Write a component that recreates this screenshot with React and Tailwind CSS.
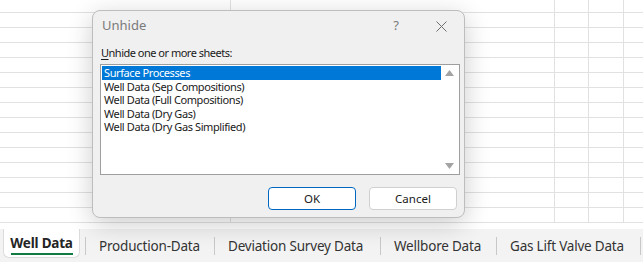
import React from 'react';

const rows = Array.from({ length: 15 });

const GridRow = ({ first }) => (
  <div className={`flex border-b border-[#e1e1e1] ${first ? 'h-[13px]' : 'h-[15px]'}`}>
    <div className="w-[231px] border-r border-[#e1e1e1]" />
    <div className="w-[324px] border-r border-[#e1e1e1]" />
    <div className="w-[34px] border-r border-[#e1e1e1]" />
    <div className="w-[35px] border-r border-[#e1e1e1]" />
    <div className="flex-1" />
  </div>
);

const sheets = [
  'Surface Processes',
  'Well Data (Sep Compositions)',
  'Well Data (Full Compositions)',
  'Well Data (Dry Gas)',
  'Well Data (Dry Gas Simplified)',
];

const tabs = [
  { name: 'Production-Data', w: 'w-[129px]' },
  { name: 'Deviation Survey Data', w: 'w-[166px]' },
  { name: 'Wellbore Data', w: 'w-[116px]' },
  { name: 'Gas Lift Valve Data', w: 'w-[144px]' },
];

export default function App() {
  return (
    <div className="w-[643px] h-[262px] flex flex-col overflow-hidden bg-white font-['Segoe_UI','Noto_Sans',sans-serif] relative">
      {/* Sheet grid */}
      <div className="h-[229px] shrink-0 overflow-hidden">
        {rows.map((_, i) => (
          <GridRow key={i} first={i === 0} />
        ))}
      </div>

      {/* Sheet tabs */}
      <div className="flex-1 flex items-stretch bg-[#f3f3f3] pl-[3px] whitespace-nowrap">
        <div className="w-[77px] shrink-0 mb-[4px] bg-white rounded-b-[6px] border border-t-0 border-[#dcdcdc] flex flex-col items-center justify-center">
          <span className="text-[13.5px] font-bold tracking-[-0.2px] text-[#242424] leading-[18px] pt-[3px]">Well Data</span>
          <div className="w-[62px] h-[2px] bg-[#107c41] mt-[1px]" />
        </div>
        <div className="w-[5px] shrink-0" />
        {tabs.map((t) => (
          <div key={t.name} className={`${t.w} shrink-0 flex items-center`}>
            <div className="w-px h-[18px] bg-[#c8c8c8] mr-[13px]" />
            <span className="text-[13.5px] tracking-[-0.2px] text-[#333333] leading-[18px]">{t.name}</span>
          </div>
        ))}
        <div className="flex items-center shrink-0">
          <div className="w-px h-[18px] bg-[#c8c8c8]" />
        </div>
      </div>

      {/* Unhide dialog */}
      <div className="absolute left-[92px] top-[10px] w-[373px] h-[208px] bg-[#f0f0f0] rounded-[8px] border border-[#bdbdbd] shadow-[0_6px_26px_rgba(0,0,0,0.2)] flex flex-col text-[11px] tracking-[-0.4px]">
        <div className="h-[30px] flex items-center pl-[9px] tracking-normal">
          <span className="flex-1 text-[#7a7a7a] text-[13px]">Unhide</span>
          <span className="w-[20px] text-center text-[#7a7a7a] text-[13px]">?</span>
          <div className="w-[30px]" />
          <svg width="11" height="11" viewBox="0 0 11 11" className="mr-[17px]">
            <path d="M0.5 0.5 L10.5 10.5 M10.5 0.5 L0.5 10.5" stroke="#6e6e6e" strokeWidth="1" />
          </svg>
        </div>
        <div className="pl-[8px] pt-[5px] text-[#1a1a1a] leading-[14px] tracking-[-0.5px]">
          <span className="underline underline-offset-2">U</span>nhide one or more sheets:
        </div>
        <div className="ml-[7px] mt-[4px] w-[360px] h-[111px] bg-white border border-[#9e9e9e] flex p-px">
          <div className="flex-1 flex flex-col text-[#1a1a1a]">
            {sheets.map((s, i) => (
              <div
                key={s}
                className={`h-[13.5px] leading-[13px] pl-[2px] ${i === 0 ? 'bg-[#0078d7] text-white' : ''}`}
              >
                {s}
              </div>
            ))}
          </div>
          <div className="w-[17px] flex flex-col items-center justify-between py-[4px]">
            <svg width="9" height="6" viewBox="0 0 9 6">
              <path d="M4.5 0 L9 6 L0 6 Z" fill="#a3a3a3" />
            </svg>
            <svg width="9" height="6" viewBox="0 0 9 6">
              <path d="M0 0 L9 0 L4.5 6 Z" fill="#a3a3a3" />
            </svg>
          </div>
        </div>
        <div className="flex justify-end gap-[13px] pr-[7px] mt-[12px]">
          <button className="w-[88px] h-[23px] rounded-[4px] bg-white border border-[#0067c0] text-[11.5px] tracking-normal text-[#1a1a1a]">
            OK
          </button>
          <button className="w-[88px] h-[23px] rounded-[4px] bg-white border border-[#d0d0d0] text-[11.5px] tracking-normal text-[#1a1a1a]">
            Cancel
          </button>
        </div>
      </div>
    </div>
  );
}
